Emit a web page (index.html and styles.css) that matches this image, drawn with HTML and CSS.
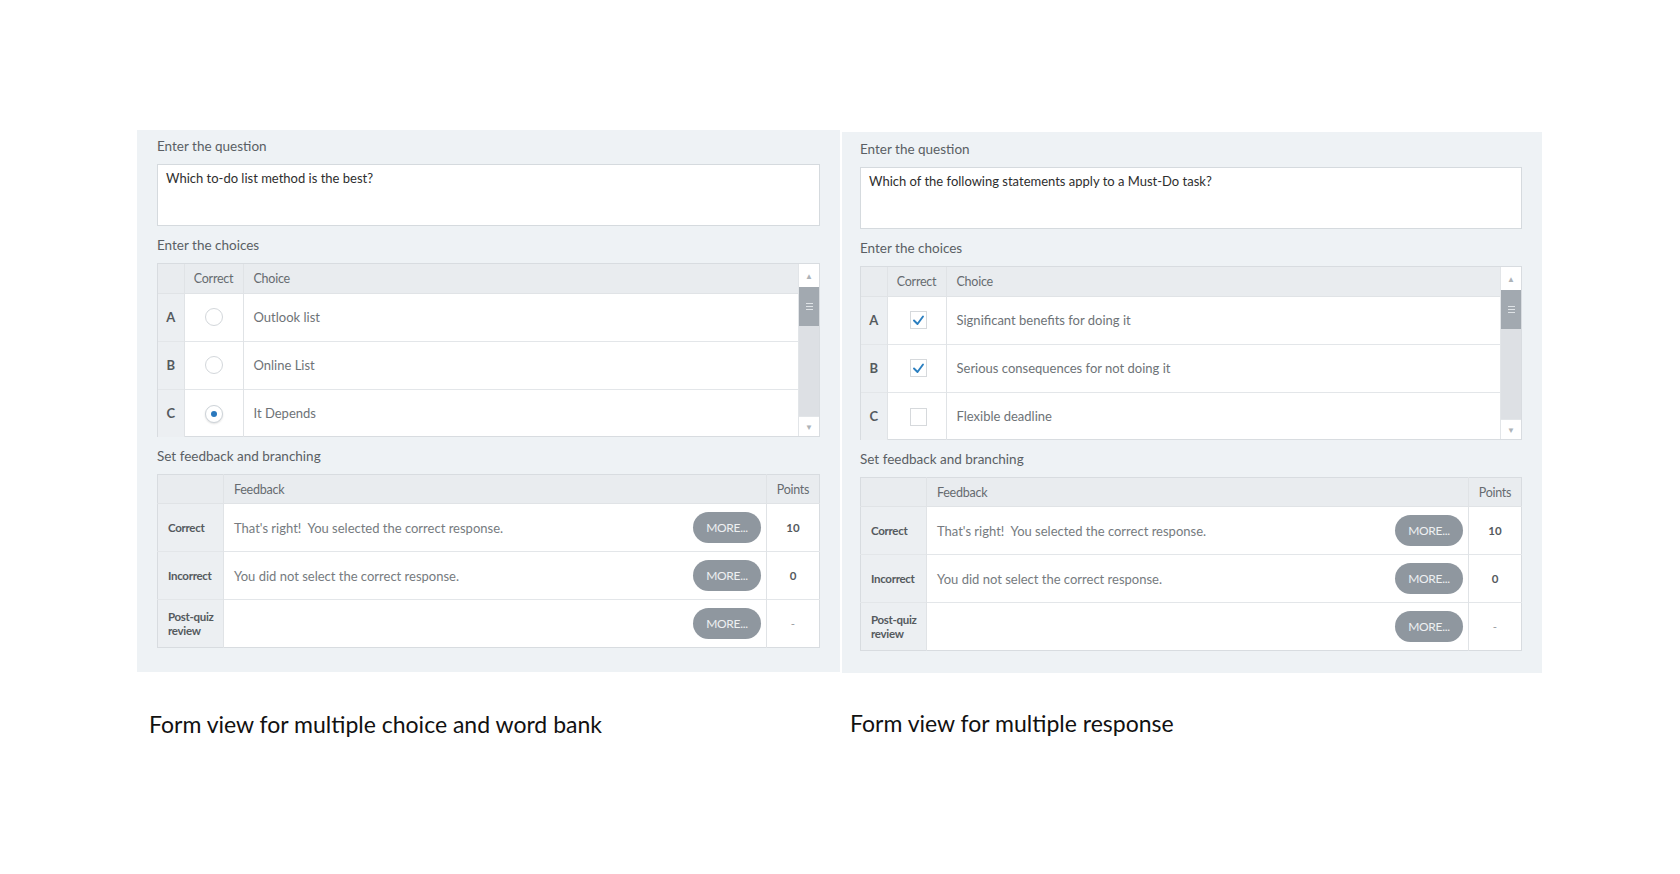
FILE: index.html
```html
<!DOCTYPE html>
<html lang="en">
<head>
<meta charset="utf-8">
<title>Form views</title>
<link rel="stylesheet" href="styles.css">
</head>
<body>
<div class="page">
  <div class="column column-left">
    <div class="panel">
      <div class="section-label first">Enter the question</div>
      <div class="question-box">Which to-do list method is the best?</div>
      <div class="section-label">Enter the choices</div>
      <div class="grid-box">
        <table class="choices">
          <thead>
            <tr><th class="col-letter"></th><th class="col-correct">Correct</th><th class="col-choice">Choice</th></tr>
          </thead>
          <tbody>
            <tr><td class="col-letter">A</td><td class="col-correct"><span class="radio"></span></td><td class="col-choice">Outlook list</td></tr>
            <tr><td class="col-letter">B</td><td class="col-correct"><span class="radio"></span></td><td class="col-choice">Online List</td></tr>
            <tr><td class="col-letter">C</td><td class="col-correct"><span class="radio on"></span></td><td class="col-choice">It Depends</td></tr>
          </tbody>
        </table>
        <div class="scrollbar">
          <div class="sb-arrow">&#9650;</div>
          <div class="sb-thumb"><span></span><span></span><span></span></div>
          <div class="sb-track"></div>
          <div class="sb-arrow">&#9660;</div>
        </div>
      </div>
      <div class="section-label">Set feedback and branching</div>
      <table class="feedback">
        <thead>
          <tr><th class="col-label"></th><th class="col-fb">Feedback</th><th class="col-points">Points</th></tr>
        </thead>
        <tbody>
          <tr><td class="col-label">Correct</td><td class="col-fb"><div class="fb-cell"><span>That's right!&nbsp; You selected the correct response.</span><span class="more">MORE...</span></div></td><td class="col-points">10</td></tr>
          <tr><td class="col-label">Incorrect</td><td class="col-fb"><div class="fb-cell"><span>You did not select the correct response.</span><span class="more">MORE...</span></div></td><td class="col-points">0</td></tr>
          <tr><td class="col-label">Post-quiz<br>review</td><td class="col-fb"><div class="fb-cell"><span></span><span class="more">MORE...</span></div></td><td class="col-points dash">-</td></tr>
        </tbody>
      </table>
    </div>
    <div class="caption">Form view for multiple choice and word bank</div>
  </div>

  <div class="column column-right">
    <div class="panel">
      <div class="section-label first">Enter the question</div>
      <div class="question-box">Which of the following statements apply to a Must-Do task?</div>
      <div class="section-label">Enter the choices</div>
      <div class="grid-box">
        <table class="choices">
          <thead>
            <tr><th class="col-letter"></th><th class="col-correct">Correct</th><th class="col-choice">Choice</th></tr>
          </thead>
          <tbody>
            <tr><td class="col-letter">A</td><td class="col-correct"><span class="check"><svg viewBox="0 0 17 18" width="17" height="18"><polyline points="4,9.5 7.5,13 13,5.5" fill="none" stroke="#2b7fc0" stroke-width="1.9" stroke-linecap="round" stroke-linejoin="round"/></svg></span></td><td class="col-choice">Significant benefits for doing it</td></tr>
            <tr><td class="col-letter">B</td><td class="col-correct"><span class="check"><svg viewBox="0 0 17 18" width="17" height="18"><polyline points="4,9.5 7.5,13 13,5.5" fill="none" stroke="#2b7fc0" stroke-width="1.9" stroke-linecap="round" stroke-linejoin="round"/></svg></span></td><td class="col-choice">Serious consequences for not doing it</td></tr>
            <tr><td class="col-letter">C</td><td class="col-correct"><span class="check"></span></td><td class="col-choice">Flexible deadline</td></tr>
          </tbody>
        </table>
        <div class="scrollbar">
          <div class="sb-arrow">&#9650;</div>
          <div class="sb-thumb"><span></span><span></span><span></span></div>
          <div class="sb-track"></div>
          <div class="sb-arrow">&#9660;</div>
        </div>
      </div>
      <div class="section-label">Set feedback and branching</div>
      <table class="feedback">
        <thead>
          <tr><th class="col-label"></th><th class="col-fb">Feedback</th><th class="col-points">Points</th></tr>
        </thead>
        <tbody>
          <tr><td class="col-label">Correct</td><td class="col-fb"><div class="fb-cell"><span>That's right!&nbsp; You selected the correct response.</span><span class="more">MORE...</span></div></td><td class="col-points">10</td></tr>
          <tr><td class="col-label">Incorrect</td><td class="col-fb"><div class="fb-cell"><span>You did not select the correct response.</span><span class="more">MORE...</span></div></td><td class="col-points">0</td></tr>
          <tr><td class="col-label">Post-quiz<br>review</td><td class="col-fb"><div class="fb-cell"><span></span><span class="more">MORE...</span></div></td><td class="col-points dash">-</td></tr>
        </tbody>
      </table>
    </div>
    <div class="caption">Form view for multiple response</div>
  </div>
</div>
</body>
</html>
```

FILE: styles.css
```css
* { box-sizing: border-box; }

html, body {
  margin: 0;
  padding: 0;
  background: #ffffff;
}

body {
  font-family: Lato, "Open Sans", sans-serif;
  color: #555;
}

.page {
  display: flex;
  align-items: flex-start;
  gap: 2px;
  padding: 130px 0 0 137px;
}

.column {
  display: flex;
  flex-direction: column;
}

.column-left { width: 703px; }
.column-right { width: 700px; margin-top: 2px; }

.panel {
  background: #eef2f5;
  padding: 6px 20px 24px 20px;
}

.column-right .panel {
  padding: 7px 20px 22px 18px;
}

.section-label {
  font-size: 13.5px;
  line-height: 20px;
  height: 20px;
  color: #5a5f64;
  margin: 9px 0 8px 0;
}

.section-label.first { margin-top: 0; }

.question-box {
  height: 62px;
  background: #ffffff;
  border: 1px solid #d5dade;
  padding: 4px 8px;
  font-size: 13px;
  line-height: 18px;
  color: #2e2e2e;
}

.grid-box {
  display: flex;
  background: #ffffff;
  border: 1px solid #d8dce0;
  height: 174px;
}

table {
  border-collapse: collapse;
  border-spacing: 0;
}

.choices {
  flex: 1;
  height: 100%;
}

.choices th,
.feedback th {
  background: #e9ecef;
  font-weight: normal;
  font-size: 12.5px;
  color: #666b70;
  height: 29px;
  text-align: left;
  padding: 0 10px;
  letter-spacing: -0.25px;
  border-bottom: 1px solid #e0e3e6;
}

.choices td {
  height: 48px;
  border-top: 1px solid #e3e6e9;
  font-size: 13px;
  color: #6e7377;
  padding: 0 10px;
}

.choices tr:first-child td { border-top: none; }

.choices .col-letter {
  width: 26px;
  padding: 0;
  text-align: center;
  background: #eceff2;
  color: #555a5e;
  font-weight: bold;
  font-size: 13px;
  border-right: 1px solid #e0e3e6;
}

.choices th.col-letter { background: #e9ecef; }

.choices .col-correct {
  width: 59px;
  padding: 0;
  text-align: center;
  border-right: 1px solid #e0e3e6;
}

.radio {
  display: inline-block;
  width: 18px;
  height: 18px;
  border-radius: 50%;
  border: 1px solid #d3d7db;
  background: #ffffff;
  vertical-align: middle;
  position: relative;
}

.radio.on {
  border-color: #cdd3d8;
  box-shadow: 0 1px 2px rgba(0, 0, 0, 0.12);
}

.radio.on::after {
  content: "";
  position: absolute;
  left: 5px;
  top: 5px;
  width: 6px;
  height: 6px;
  border-radius: 50%;
  background: #2a78bd;
}

.check {
  display: inline-block;
  width: 17px;
  height: 18px;
  margin-left: 4px;
  border: 1px solid #d6d9dc;
  background: #ffffff;
  vertical-align: middle;
}

.check svg {
  display: block;
  margin: -1px 0 0 -1px;
}

.scrollbar {
  width: 21px;
  display: flex;
  flex-direction: column;
  border-left: 1px solid #e2e5e8;
}

.sb-arrow {
  height: 23px;
  background: #ffffff;
  color: #adb3b8;
  font-size: 8px;
  display: flex;
  align-items: center;
  justify-content: center;
}

.sb-arrow:last-child {
  height: 20px;
  border-top: 1px solid #e2e5e8;
}

.sb-thumb {
  height: 39px;
  background: #a2a9b0;
  display: flex;
  flex-direction: column;
  align-items: center;
  justify-content: center;
  gap: 2px;
}

.sb-thumb span {
  display: block;
  width: 7px;
  height: 1px;
  background: #dfe3e6;
}

.sb-track {
  flex: 1;
  background: #dde0e4;
}

.feedback {
  width: 100%;
  background: #ffffff;
  border: 1px solid #d8dce0;
}

.feedback td {
  height: 48px;
  border-top: 1px solid #e3e6e9;
  font-size: 13px;
  color: #767b80;
}

.feedback tbody tr:first-child td { border-top: none; }

.feedback .col-label {
  width: 66px;
  background: #eceff2;
  border-right: 1px solid #e0e3e6;
  padding: 0 0 0 10px;
  font-weight: bold;
  font-size: 11.5px;
  line-height: 14px;
  color: #555a5e;
  letter-spacing: -0.3px;
}

.feedback th.col-label { background: #e9ecef; }

.feedback .col-fb {
  padding: 0 5px 0 10px;
}

.fb-cell {
  display: flex;
  align-items: center;
  justify-content: space-between;
}

.more {
  display: inline-flex;
  align-items: center;
  justify-content: center;
  width: 68px;
  height: 31px;
  border-radius: 16px;
  background: #8f979f;
  color: #eef0f2;
  font-size: 12px;
  letter-spacing: -0.3px;
}

.feedback .col-points {
  width: 53px;
  padding: 0;
  text-align: center;
  border-left: 1px solid #e0e3e6;
  font-weight: bold;
  font-size: 11.5px;
  color: #555a5e;
}

.feedback th.col-points {
  font-weight: normal;
  font-size: 12.5px;
  color: #666b70;
}

.feedback .col-points.dash {
  font-weight: normal;
  color: #9a9ea2;
}

.caption {
  margin-top: 38px;
  padding-left: 12px;
  font-family: Lato, "Open Sans", sans-serif;
  font-size: 23px;
  line-height: 28px;
  color: #111111;
}

.column-right .caption {
  padding-left: 8px;
  margin-top: 36px;
}
```
